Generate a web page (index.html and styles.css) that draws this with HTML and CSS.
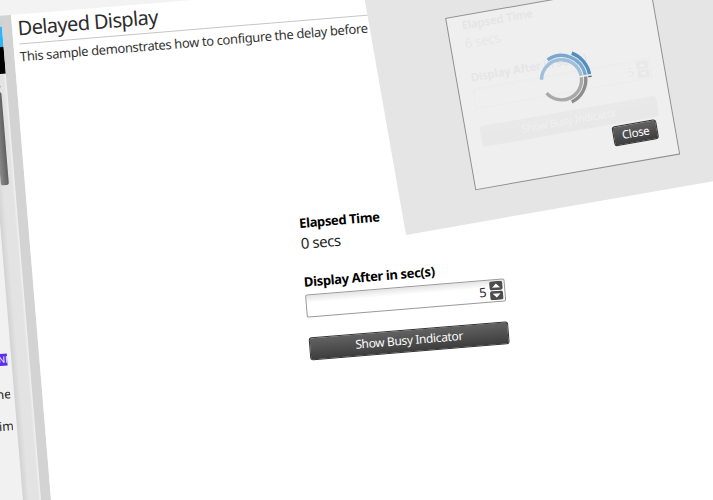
FILE: index.html
```html
<!DOCTYPE html>
<html lang="en">
<head>
<meta charset="utf-8">
<title>Delayed Display</title>
<link rel="stylesheet" href="styles.css">
</head>
<body>
<div class="workspace">
  <aside class="sidebar">
    <div class="brand"></div>
    <div class="brand-bar"></div>
    <div class="sidebar-body">
      <div class="samples">
        <div class="badge">NE</div>
        <div class="sample first">he</div>
        <div class="sample">aim</div>
      </div>
      <div class="scrollbar"><div class="arrow"></div><div class="thumb"></div></div>
    </div>
  </aside>
  <div class="divider"></div>
  <main class="page">
    <h1>Delayed Display</h1>
    <p class="intro">This sample demonstrates how to configure the delay before</p>
    <section class="form">
      <h2 class="elapsed">Elapsed Time</h2>
      <div class="secs">0 secs</div>
      <h2 class="after">Display After in sec(s)</h2>
      <div class="number"><span>5</span>
        <svg width="14" height="19" viewBox="0 0 14 19"><rect x=".5" y="0" width="13" height="9" rx="2"/><rect x=".5" y="10" width="13" height="9" rx="2"/><path d="M3 6.5 7 2.5l4 4zM3 12.5h8L7 16.5z"/></svg>
      </div>
      <div class="button">Show Busy Indicator</div>
    </section>
  </main>
</div>
<div class="overlay">
  <div class="dialog">
    <section class="form ghost">
      <h2 class="elapsed">Elapsed Time</h2>
      <div class="secs">6 secs</div>
      <h2 class="after">Display After in sec(s)</h2>
      <div class="number"><span>5</span>
        <svg width="14" height="19" viewBox="0 0 14 19"><rect x=".5" y="0" width="13" height="9" rx="2"/><rect x=".5" y="10" width="13" height="9" rx="2"/><path d="M3 6.5 7 2.5l4 4zM3 12.5h8L7 16.5z"/></svg>
      </div>
      <div class="button">Show Busy Indicator</div>
    </section>
    <svg class="spinner" width="64" height="64" viewBox="-32 -32 64 64">
      <path stroke="#a0bfda" d="M-19.7-3.5A20 20 0 0 1 20-.7"/>
      <path stroke="#78a8cf" d="M-10.3-22A24.3 24.3 0 0 1 24.3-.7"/>
      <path stroke="#508fbe" d="M14.7-24.5A28.6 28.6 0 0 1 28.6-.7"/>
      <path stroke="#a9a9a9" d="M20 1A20 20 0 0 1-17 10.6"/>
      <path stroke="#8d8d8d" d="M24.3 1A24.3 24.3 0 0 1 6.3 23.5"/>
      <path stroke="#686868" d="M28.6 .9 28.5 2.3"/>
    </svg>
    <div class="button close">Close</div>
  </div>
</div>
</body>
</html>
```
FILE: styles.css
```css
* { box-sizing: border-box; }
body {
  margin: 0;
  width: 713px;
  height: 500px;
  overflow: hidden;
  position: relative;
  background: #f3f3f3;
  font-family: "Noto Sans", "Open Sans", sans-serif;
}
.workspace {
  position: absolute;
  left: -108.7px;
  top: 15px;
  width: 960px;
  height: 700px;
  display: flex;
  transform: rotate(-4.72deg);
  transform-origin: 120px 0;
}
.sidebar { width: 110px; display: flex; flex-direction: column; background: #f1f1f1; }
.brand { height: 31px; background: #2bb5f5; border-top: 11px solid #d3d3d3; }
.brand-bar { height: 27px; background: #000; }
.sidebar-body { flex: 1; display: flex; }
.samples {
  width: 88px;
  padding-top: 279px;
  overflow: hidden;
  display: flex;
  flex-direction: column;
  align-items: flex-end;
  font-size: 12.5px;
  color: #222;
}
.badge { height: 12px; width: 11px; overflow: hidden; background: #5a2df0; color: #fff; font-size: 9px; line-height: 12px; padding-left: 2px; }
.sample { height: 32px; line-height: 16px; margin-right: -1px; }
.sample.first { margin-top: 21px; }
.scrollbar {
  width: 18px;
  margin-left: 4px;
  padding-top: 9px;
  background: linear-gradient(90deg, #d2d2d2, #e3e3e3 35%, #e3e3e3 85%, #f2f2f2);
}
.arrow { width: 0; height: 0; margin-left: 4px; border: 4px solid transparent; border-top: 0; border-bottom: 4px solid #555; }
.thumb { width: 8px; height: 93px; margin: 5px 0 0 4px; border-radius: 2px; background: linear-gradient(90deg, #8a8a8a, #606060); }
.divider { width: 10px; background: #d3d3d3; }
.page { flex: 1; background: #fff; padding-left: 5.5px; }
h1 {
  margin: 0;
  height: 30px;
  border-bottom: 1px solid #c6c6c6;
  font-size: 20px;
  font-weight: 400;
  line-height: 28px;
  letter-spacing: -.6px;
  color: #2c2c2c;
}
.intro { margin: 3px 0 0 0; font-size: 13px; line-height: 18px; letter-spacing: -.38px; color: #333; white-space: nowrap; }
.form { margin: 171px 0 0 264.5px; width: 200px; }
h2 { margin: 0; font-size: 13px; line-height: 18px; font-weight: 700; letter-spacing: -.36px; color: #000; white-space: nowrap; }
.secs { font-size: 15px; line-height: 20px; letter-spacing: -.45px; color: #222; margin-top: 1px; }
.after { margin-top: 20px; }
.number {
  height: 23px;
  margin-top: 4px;
  border: 1px solid #999;
  border-radius: 2px;
  background: linear-gradient(#e4e4e4, #fff 35%);
  display: flex;
  align-items: center;
  justify-content: flex-end;
  gap: 3px;
  padding-right: 1px;
  font-size: 13px;
  color: #222;
}
.number rect { fill: #4c4c4c; }
.number path { fill: #fff; }
.button {
  height: 23px;
  margin-top: 20px;
  border: 1px solid #333;
  border-radius: 3px;
  background: linear-gradient(#626262, #3d3d3d);
  color: #fff;
  font-size: 12px;
  line-height: 20px;
  letter-spacing: -.36px;
  text-align: center;
}
.overlay {
  position: absolute;
  left: 406px;
  top: -165px;
  width: 600px;
  height: 400px;
  padding: 193px 0 0 76.3px;
  background: #e5e5e5;
  transform: rotate(-9.95deg);
  transform-origin: 0 100%;
}
.dialog {
  position: relative;
  width: 207.5px;
  height: 175px;
  border: 1px solid #8f8f8f;
  background: #efefef;
}
.ghost { position: absolute; left: 13.5px; top: 1px; margin: 0; opacity: .035; transform: scale(.895); transform-origin: 0 0; }
.spinner { position: absolute; left: 71px; top: 48px; }
.spinner path { fill: none; stroke-width: 3.4; }
.close { position: absolute; left: 144px; top: 135px; width: 45px; height: 20px; margin: 0; font-size: 11.5px; line-height: 18px; letter-spacing: -.3px; }
```
